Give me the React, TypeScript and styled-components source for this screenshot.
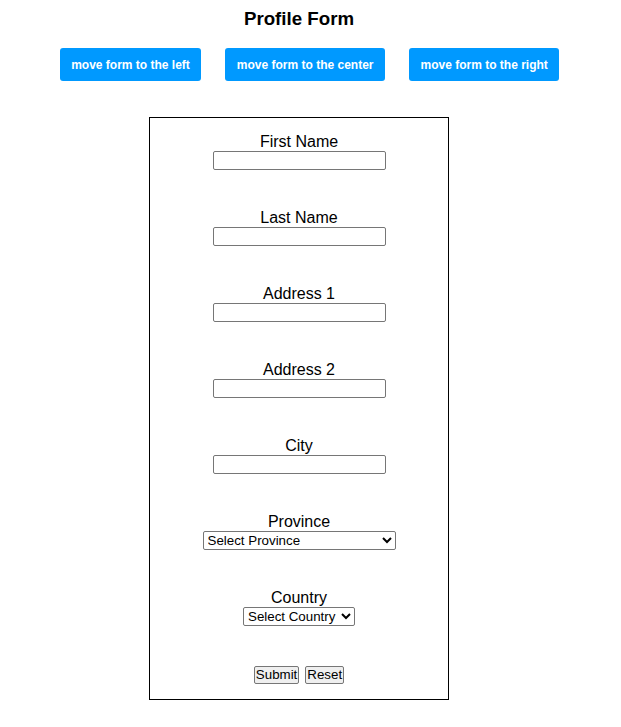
import React from "react";
import styled, { createGlobalStyle } from "styled-components";

const GlobalStyle = createGlobalStyle`
  body {
    margin: 8px;
    font-family: "Liberation Sans", Arial, sans-serif;
    color: #000;
    background: #fff;
  }
`;

const Page = styled.div`
  display: flex;
  flex-direction: column;
`;

const Column = styled.div`
  width: 582px;
  display: flex;
  flex-direction: column;
  align-items: center;
`;

const Title = styled.h1`
  margin: 0;
  font-size: 18.72px;
  font-weight: bold;
  line-height: 21.5px;
  text-align: center;
`;

const Toolbar = styled.div`
  display: flex;
  justify-content: center;
  gap: 24px;
  margin-top: 18.5px;
  padding-right: 2px;
`;

const MoveButton = styled.button`
  height: 33px;
  padding: 0 11.5px;
  border: none;
  border-radius: 3px;
  background: #0099ff;
  color: #fff;
  font-family: "Liberation Sans", Arial, sans-serif;
  font-size: 12px;
  font-weight: bold;
  cursor: pointer;
`;

const Form = styled.form`
  margin-top: 36px;
  width: 300px;
  box-sizing: border-box;
  border: 1px solid #000;
  padding: 15px 0 15px;
  display: flex;
  flex-direction: column;
  align-items: center;
  gap: 39px;
`;

const Field = styled.div`
  display: flex;
  flex-direction: column;
  align-items: center;
`;

const Label = styled.label`
  font-size: 16px;
  line-height: 18px;
`;

const TextInput = styled.input`
  width: 173px;
  height: 19px;
  box-sizing: border-box;
  border: 1px solid #767676;
  border-radius: 2px;
  padding: 1px 2px;
  font-family: "Liberation Sans", Arial, sans-serif;
  font-size: 13.33px;
`;

const Select = styled.select<{ $w: number }>`
  width: ${(p) => p.$w}px;
  height: 19px;
  box-sizing: border-box;
  border: 1px solid #767676;
  border-radius: 2px;
  padding: 0;
  font-family: "Liberation Sans", Arial, sans-serif;
  font-size: 13.33px;
  color: #000;
  background: #fff;
`;

const Actions = styled.div`
  display: flex;
  gap: 6px;
  margin-top: 1px;
`;

const FormButton = styled.button`
  height: 18px;
  box-sizing: border-box;
  padding: 0 1px;
  border: 1px solid #767676;
  border-radius: 2px;
  background: #efefef;
  color: #000;
  font-family: "Liberation Sans", Arial, sans-serif;
  font-size: 13.33px;
  line-height: 14px;
`;

const fields = ["First Name", "Last Name", "Address 1", "Address 2", "City"];

export default function App() {
  return (
    <>
      <GlobalStyle />
      <Page>
        <Column>
          <Title>Profile Form</Title>
        </Column>
        <Toolbar>
          <MoveButton type="button">move form to the left</MoveButton>
          <MoveButton type="button">move form to the center</MoveButton>
          <MoveButton type="button">move form to the right</MoveButton>
        </Toolbar>
        <Column>
          <Form onSubmit={(e) => e.preventDefault()}>
            {fields.map((f) => (
              <Field key={f}>
                <Label>{f}</Label>
                <TextInput type="text" />
              </Field>
            ))}
            <Field>
              <Label>Province</Label>
              <Select $w={193} defaultValue="">
                <option value="">Select Province</option>
              </Select>
            </Field>
            <Field>
              <Label>Country</Label>
              <Select $w={112} defaultValue="">
                <option value="">Select Country</option>
              </Select>
            </Field>
            <Actions>
              <FormButton type="submit">Submit</FormButton>
              <FormButton type="reset">Reset</FormButton>
            </Actions>
          </Form>
        </Column>
      </Page>
    </>
  );
}
